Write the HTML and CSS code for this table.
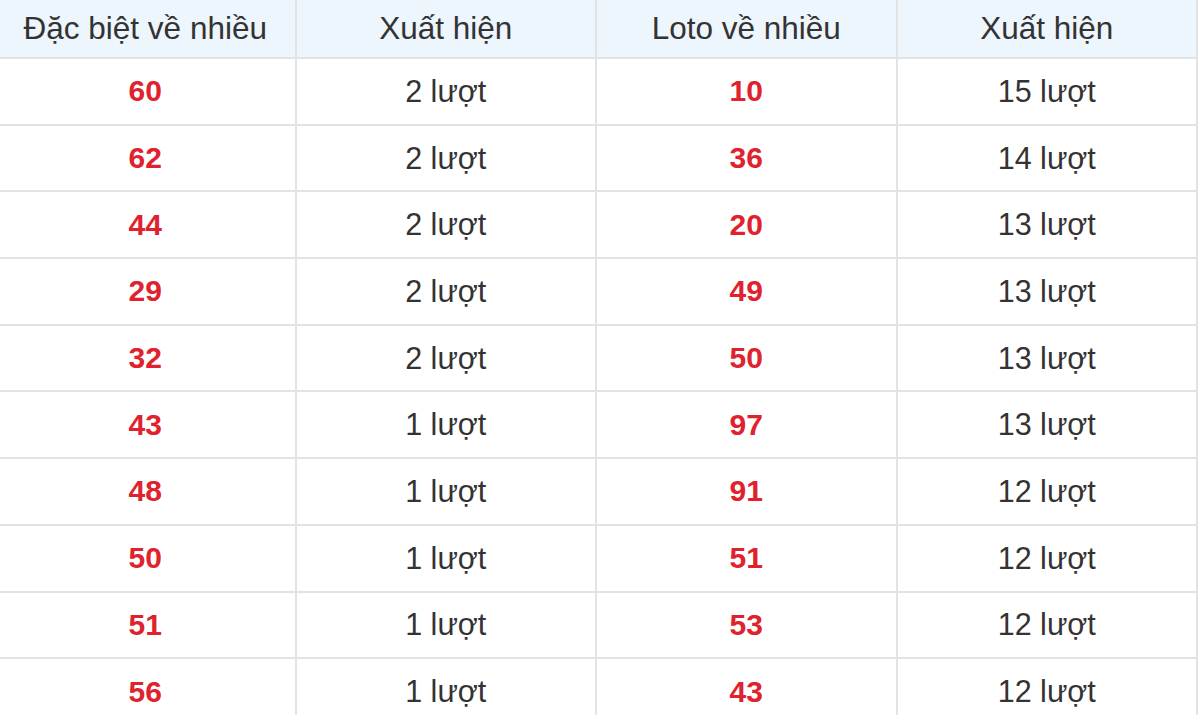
FILE: index.html
```html
<!DOCTYPE html>
<html lang="vi">
<head>
<meta charset="utf-8">
<title>Thống kê</title>
<link rel="stylesheet" href="styles.css">
</head>
<body>
<div class="wrap">
<table class="stats">
<thead>
<tr><th>Đặc biệt về nhiều</th><th>Xuất hiện</th><th>Loto về nhiều</th><th>Xuất hiện</th></tr>
</thead>
<tbody>
<tr><td class="num">60</td><td>2 lượt</td><td class="num">10</td><td>15 lượt</td></tr>
<tr><td class="num">62</td><td>2 lượt</td><td class="num">36</td><td>14 lượt</td></tr>
<tr><td class="num">44</td><td>2 lượt</td><td class="num">20</td><td>13 lượt</td></tr>
<tr><td class="num">29</td><td>2 lượt</td><td class="num">49</td><td>13 lượt</td></tr>
<tr><td class="num">32</td><td>2 lượt</td><td class="num">50</td><td>13 lượt</td></tr>
<tr><td class="num">43</td><td>1 lượt</td><td class="num">97</td><td>13 lượt</td></tr>
<tr><td class="num">48</td><td>1 lượt</td><td class="num">91</td><td>12 lượt</td></tr>
<tr><td class="num">50</td><td>1 lượt</td><td class="num">51</td><td>12 lượt</td></tr>
<tr><td class="num">51</td><td>1 lượt</td><td class="num">53</td><td>12 lượt</td></tr>
<tr><td class="num">56</td><td>1 lượt</td><td class="num">43</td><td>12 lượt</td></tr>
</tbody>
</table>
</div>
</body>
</html>
```
FILE: styles.css
```css
html, body {
  margin: 0;
  padding: 0;
  background: #ffffff;
}
.wrap {
  width: 1200px;
  height: 715px;
  overflow: hidden;
}
.stats {
  width: 1204px;
  margin-left: -6px;
  border-collapse: collapse;
  table-layout: fixed;
  font-family: "Liberation Sans", Arial, sans-serif;
  font-size: 30.5px;
  color: #333333;
}
.stats th,
.stats td {
  border: 2px solid #e3e3e6;
  text-align: center;
  vertical-align: middle;
  padding: 0;
}
.stats thead tr {
  height: 58px;
}
.stats th {
  background: #edf5fd;
  font-weight: normal;
  font-size: 31.5px;
  border-top: none;
}
.stats tbody tr {
  height: 66.7px;
}
.stats td.num {
  color: #e0212e;
  font-weight: bold;
  font-size: 30px;
}
```
